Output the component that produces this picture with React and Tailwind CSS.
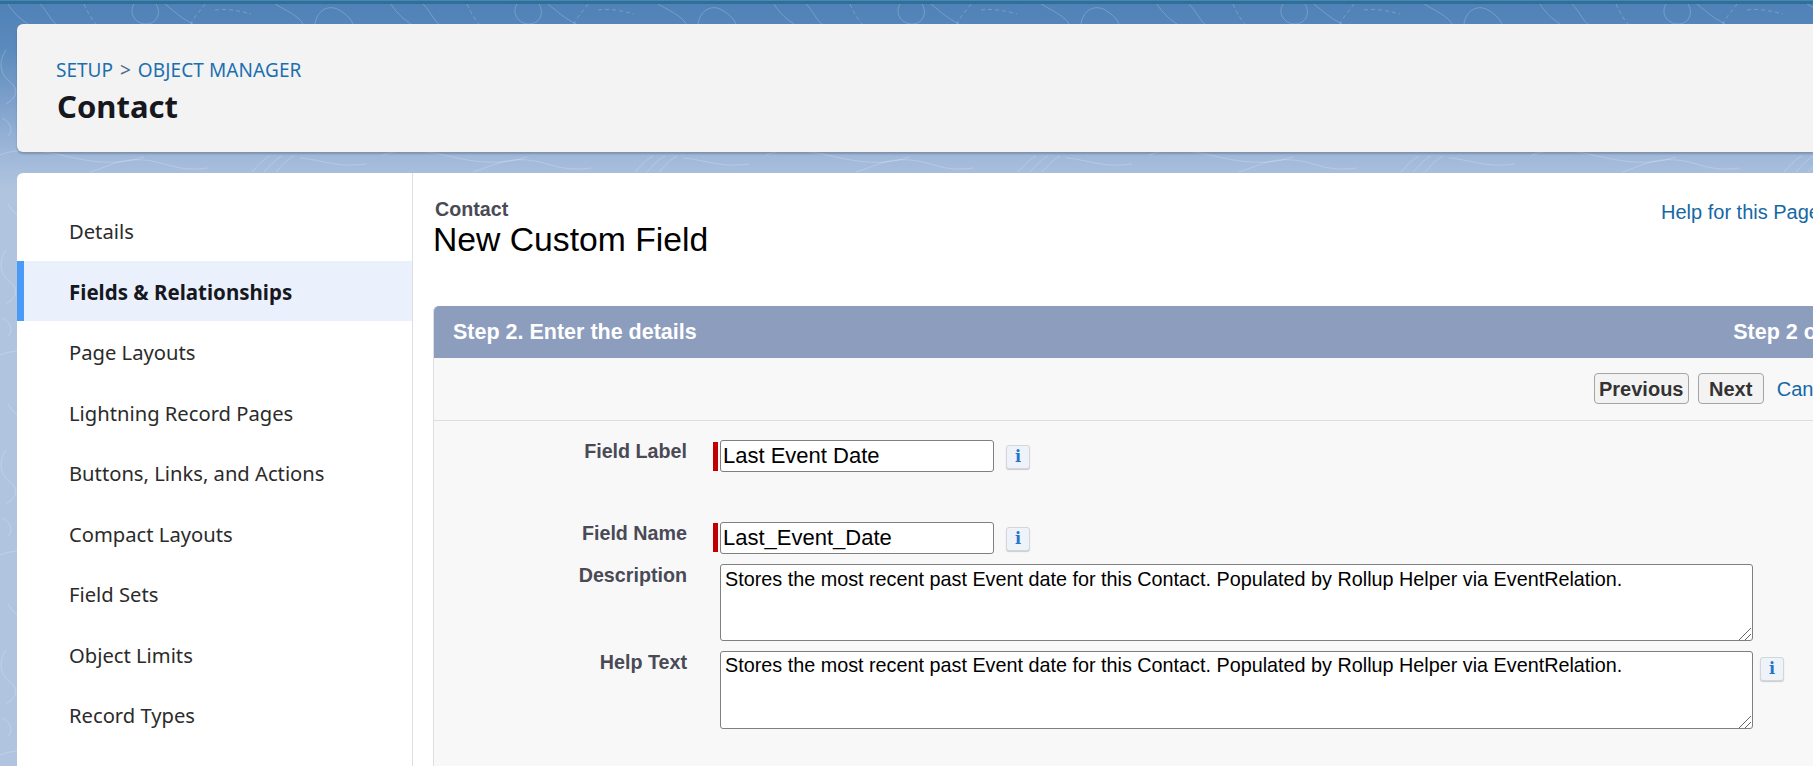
import React from 'react';

const NAV_ITEMS = [
  'Details',
  'Fields & Relationships',
  'Page Layouts',
  'Lightning Record Pages',
  'Buttons, Links, and Actions',
  'Compact Layouts',
  'Field Sets',
  'Object Limits',
  'Record Types',
];

const DESC = 'Stores the most recent past Event date for this Contact. Populated by Rollup Helper via EventRelation.';

// contour lines behind the cards, one tile repeated
function Contours() {
  return (
    <svg className="absolute inset-0 pointer-events-none" width="1813" height="766">
      <defs>
        <pattern id="topo" width="383" height="200" patternUnits="userSpaceOnUse">
          <g fill="none" stroke="#ffffff" strokeOpacity="0.2" strokeWidth="1">
            <path d="M8 4c6 10 14 16 20 20" />
            <path d="M40 4c8 8 10 16 18 22" />
            <path d="M84 4c4 10 10 18 12 20" strokeDasharray="4 3" />
            <path d="M134 4c-6 10 2 20 12 20s16-10 10-20" />
            <path d="M165 4c10 8 16 14 28 20" />
            <path d="M205 4c-4 6-12 14-14 20M215 10c14-2 28 2 36 4" strokeDasharray="4 3" />
            <path d="M275 4c10 6 24 12 28 20" />
            <path d="M315 24c2-14 14-20 24-14s12 10 14 14" />
            <path d="M0 155c20-8 44-4 70 2s50 8 74 0" />
            <path d="M90 172c20-6 30-14 54-12s30 12 64 8" />
            <path d="M252 172c6-6 10-12 18-16M264 172c6-6 10-12 18-16M276 172c6-6 10-12 18-16" />
            <path d="M300 158c24 2 36 10 66 6" />
            <path d="M6 50c-8 12-6 24 4 32s6 16-4 22" />
            <path d="M2 118c8 4 12 12 6 18" />
          </g>
        </pattern>
      </defs>
      <rect width="1813" height="766" fill="url(#topo)" />
    </svg>
  );
}

function InfoButton({ className }) {
  return (
    <span className={`flex h-[24px] w-[24px] shrink-0 items-center justify-center rounded-[3px] border border-[#d4d6da] bg-[#eef3f9] font-['DejaVu_Serif',serif] text-[16px] font-bold leading-none text-[#2674c9] shadow-[0_1px_1px_#c9cbcf] ${className}`}>
      i
    </span>
  );
}

function RedBar({ className }) {
  return <span className={`w-[5px] shrink-0 bg-[#c00000] ${className}`} />;
}

function Button({ children, className }) {
  return (
    <button className={`flex h-[31px] items-center justify-center rounded-[4px] border border-[#a5a5a5] bg-[#f3f3f3] font-['Liberation_Sans',sans-serif] text-[20px] font-bold text-[#333333] ${className}`}>
      {children}
    </button>
  );
}

function TextBox({ className, textClass }) {
  return (
    <div className={`relative ${className}`}>
      <textarea
        className={`h-full w-[1033px] resize-none rounded-[3px] border border-[#7f7f7f] bg-white px-[4px] font-['Liberation_Sans',sans-serif] text-[19.8px] leading-[24px] text-black outline-none ${textClass}`}
        defaultValue={DESC}
        readOnly
      />
      <svg className="absolute bottom-[1px] right-[2px]" width="12" height="12" viewBox="0 0 12 12" fill="none" stroke="#666666" strokeWidth="1">
        <path d="M12 0L0 12M12 6L6 12" />
      </svg>
    </div>
  );
}

const labelCls = "w-[253px] shrink-0 pt-[2px] text-right text-[19.7px] font-bold leading-none text-[#4a4a56]";
const inputCls = "h-[32px] w-[274px] rounded-[3px] border border-[#7f7f7f] bg-white px-[2px] pb-[1px] font-['Liberation_Sans',sans-serif] text-[22px] text-black outline-none";

export default function App() {
  return (
    <div className="relative flex h-[766px] w-[1813px] flex-col overflow-hidden bg-[linear-gradient(#4f81b7_0px,#5b8abd_50px,#9db6d9_150px,#b0c4df_190px)] font-['Noto_Sans',sans-serif]">
      <Contours />

      <div className="relative mt-px h-[3px] shrink-0 bg-[#2a7298]" />

      {/* Header */}
      <header className="relative ml-[17px] mt-[20px] flex h-[128px] shrink-0 flex-col rounded-l-[6px] bg-[#f3f3f3] pl-[40px] pt-[34px] shadow-[0_2px_2px_rgba(0,0,0,0.2)]">
        <div className="flex items-center text-[19px] leading-[24px] text-[#1b6fb0]">
          <span className="-ml-[1px]">SETUP</span>
          <span className="mx-[7px] text-[#54698d]">&gt;</span>
          <span className="tracking-[0.1px]">OBJECT MANAGER</span>
        </div>
        <h1 className="mt-[4px] text-[31px] font-bold leading-[40px] text-[#16181d]">Contact</h1>
      </header>

      {/* Main card */}
      <div className="relative ml-[17px] mt-[21px] flex min-h-0 flex-1 overflow-hidden rounded-tl-[6px] bg-white">
        <nav className="w-[396px] shrink-0 border-r border-[#dddfe3] pt-[27px]">
          {NAV_ITEMS.map((item, i) => (
            <div
              key={item}
              className={i === 1
                ? 'flex h-[60.5px] items-center border-l-[7px] border-[#4a9bf8] bg-[#eaf1fd] pl-[45px] pt-[3px] text-[20.5px] font-bold text-[#16181d]'
                : 'flex h-[60.5px] items-center pl-[52px] pt-[2px] text-[20.2px] text-[#2b2b2b]'}
            >
              {item}
            </div>
          ))}
        </nav>

        <main className="w-[1440px] shrink-0 pl-[20px] font-['Liberation_Sans',sans-serif]">
          <div className="flex h-[133px] justify-between pr-[33px] pt-[25px]">
            <div>
              <div className="pl-[2px] text-[19.7px] font-bold leading-[22px] text-[#4a4a56]">Contact</div>
              <div className="pt-[1px] text-[33.7px] leading-[36px] text-black">New Custom Field</div>
            </div>
            <a className="pt-[2px] text-[20px] leading-[24px] text-[#1468a5]">Help for this Page</a>
          </div>

          <section className="min-h-[460px] rounded-t-[5px] border-l border-[#dddfe3] bg-[#f8f8f8]">
            <div className="flex h-[52px] items-center justify-between rounded-t-[5px] bg-[#8d9dbe] pl-[19px] pr-[11px] text-[21.5px] font-bold text-white">
              <span>Step 2. Enter the details</span>
              <span>Step 2 of 4</span>
            </div>

            <div className="flex h-[63px] items-center justify-end border-b border-[#dddddd] pb-[1px] pr-[14px]">
              <Button className="w-[95px]">Previous</Button>
              <Button className="ml-[9px] w-[66px]">Next</Button>
              <a className="ml-[13px] text-[20px] text-[#1468a5]">Cancel</a>
            </div>

            <div className="flex pt-[19px]">
              <label className={labelCls}>Field Label</label>
              <RedBar className="ml-[26px] mt-[2px] h-[29px]" />
              <input className={`${inputCls} ml-[2px]`} defaultValue="Last Event Date" readOnly />
              <InfoButton className="ml-[12px] mt-[5px]" />
            </div>

            <div className="flex pt-[50px]">
              <label className={labelCls}>Field Name</label>
              <RedBar className="ml-[26px] mt-[1px] h-[29px]" />
              <input className={`${inputCls} ml-[2px]`} defaultValue="Last_Event_Date" readOnly />
              <InfoButton className="ml-[12px] mt-[5px]" />
            </div>

            <div className="flex pt-[10px]">
              <label className={labelCls}>Description</label>
              <TextBox className="ml-[33px] h-[77px]" textClass="py-[2px]" />
            </div>

            <div className="flex pt-[10px]">
              <label className={labelCls}>Help Text</label>
              <TextBox className="ml-[33px] h-[78px]" textClass="py-[1px]" />
              <InfoButton className="ml-[7px] mt-[6px]" />
            </div>
          </section>
        </main>
      </div>
    </div>
  );
}
